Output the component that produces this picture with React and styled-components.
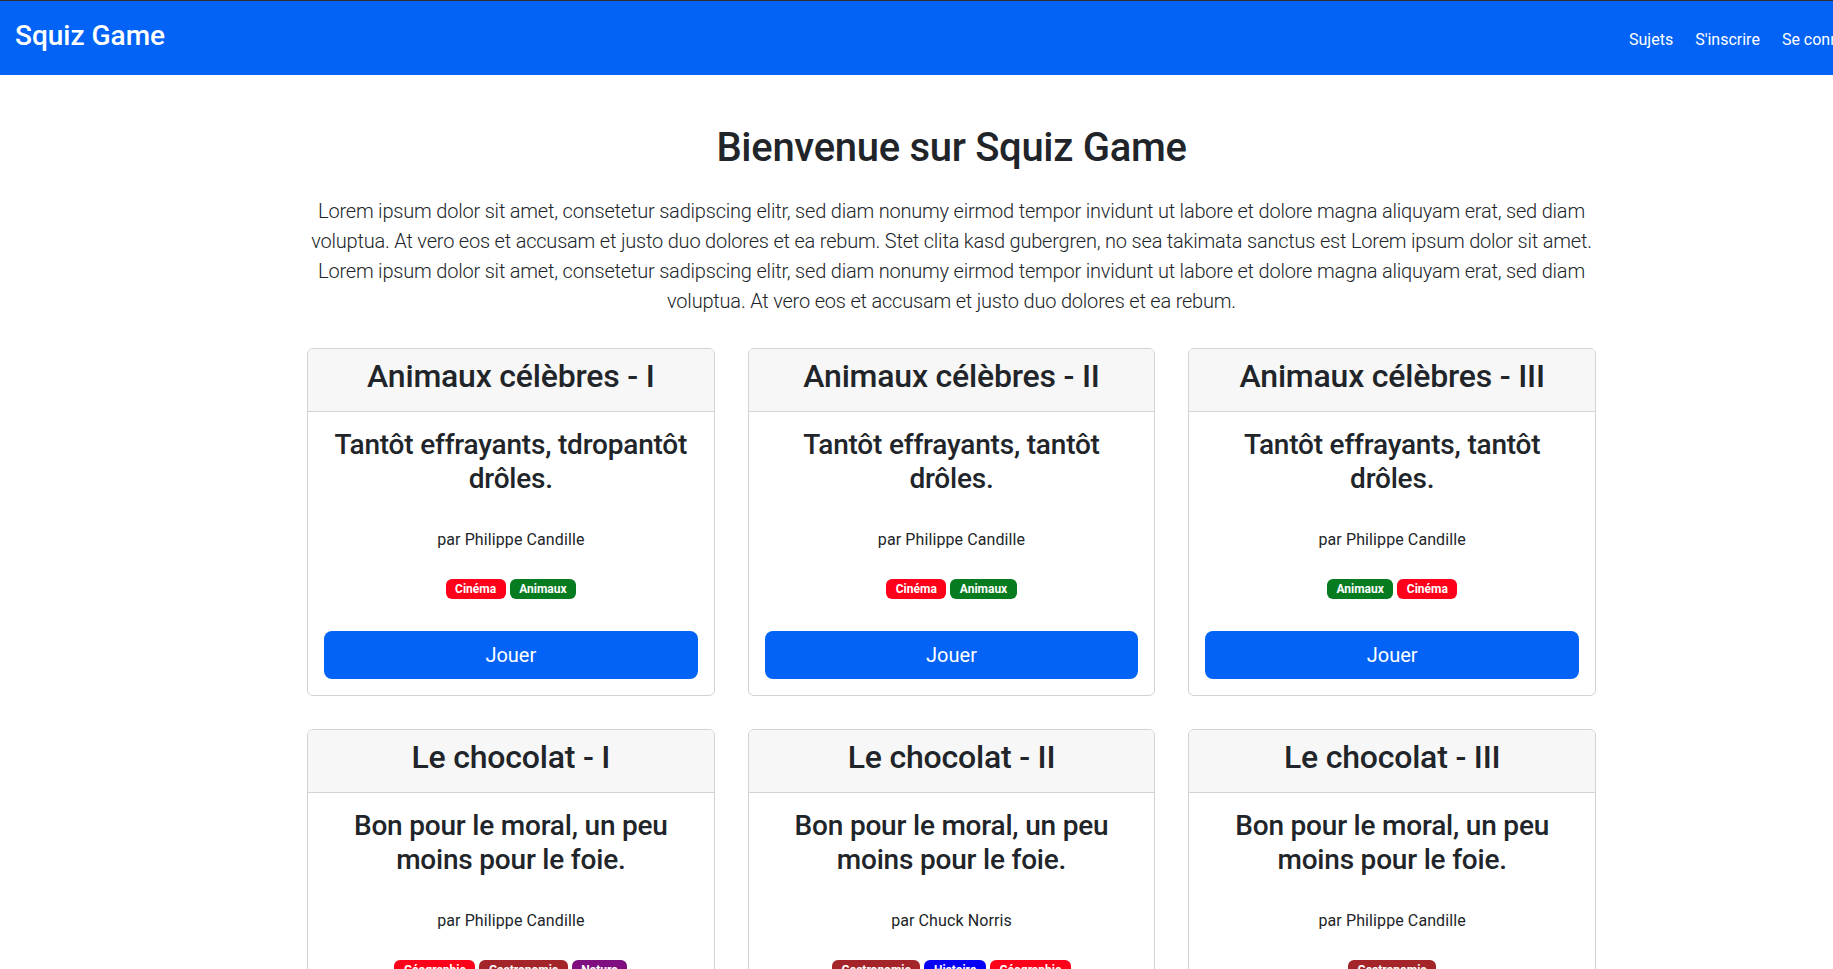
import React from "react";
import styled, { createGlobalStyle } from "styled-components";

const GlobalStyle = createGlobalStyle`
  html, body {
    margin: 0;
    padding: 0;
    overflow-x: hidden;
    background: #fff;
  }
  body {
    font-family: Roboto, "Noto Sans", sans-serif;
    color: #212529;
  }
`;

const Page = styled.div`
  width: 1903px;
`;

const Navbar = styled.nav`
  height: 74px;
  border-top: 1px solid #2e2e2e;
  background: #0263f6;
  display: flex;
  align-items: center;
  padding: 0 28px 0 15px;
`;

const Brand = styled.a`
  font-size: 28px;
  font-weight: 500;
  color: #fff;
  margin-top: -6px;
`;

const NavLinks = styled.ul`
  margin: 0 0 0 auto;
  padding: 0;
  list-style: none;
  display: flex;
  gap: 22px;
`;

const NavLink = styled.li`
  font-size: 16px;
  color: #fff;
  margin-top: 2px;
`;

const Main = styled.main`
  width: 1296px;
  margin: 0 auto;
  padding-top: 49px;
`;

const Heading = styled.h1`
  margin: 0 0 24px;
  font-size: 40px;
  font-weight: 500;
  line-height: 48px;
  text-align: center;
  letter-spacing: -0.3px;
`;

const Lead = styled.p`
  margin: 0 0 32px;
  font-size: 20px;
  font-weight: 300;
  line-height: 30px;
  text-align: center;
  letter-spacing: -0.2px;
`;

const Grid = styled.div`
  width: 1289px;
  margin: 0 auto;
  display: grid;
  grid-template-columns: repeat(3, 1fr);
  gap: 33px;
`;

const Card = styled.div`
  border: 1px solid #d3d3d3;
  border-radius: 6px;
  overflow: hidden;
  text-align: center;
`;

const CardHeader = styled.div`
  background: #f7f7f7;
  border-bottom: 1px solid #d3d3d3;
  padding: 8px 16px 16px;
`;

const CardName = styled.h2`
  margin: 0;
  font-size: 32px;
  font-weight: 500;
  line-height: 38px;
  letter-spacing: -0.2px;
`;

const CardBody = styled.div`
  padding: 16px;
`;

const CardTitle = styled.h3`
  margin: 0 0 32px;
  font-size: 28px;
  font-weight: 500;
  line-height: 34px;
  letter-spacing: -0.2px;
`;

const Author = styled.p`
  margin: 0 0 27px;
  font-size: 16px;
  line-height: 24px;
  letter-spacing: 0.1px;
`;

const Tags = styled.div`
  display: flex;
  justify-content: center;
  gap: 4px;
  margin-bottom: 32px;
`;

const Tag = styled.span`
  display: inline-block;
  padding: 4px 9.5px;
  border-radius: 6px;
  font-size: 12px;
  font-weight: 700;
  line-height: 12px;
  color: #fff;
  background: ${(p) => p.$color};
`;

const PlayButton = styled.button`
  display: block;
  width: 100%;
  height: 48px;
  border: none;
  border-radius: 8px;
  background: #0263f6;
  color: #fff;
  font-family: inherit;
  font-size: 20px;
  cursor: pointer;
`;

const COLORS = {
  Cinéma: "#fe0019",
  Animaux: "#067b1f",
  Géographie: "#fe0019",
  Gastronomie: "#a3252a",
  Nature: "#7f0f80",
  Histoire: "#0600f6",
};

const quizzes = [
  {
    name: "Animaux célèbres - I",
    title: "Tantôt effrayants, tdropantôt drôles.",
    author: "Philippe Candille",
    tags: ["Cinéma", "Animaux"],
  },
  {
    name: "Animaux célèbres - II",
    title: "Tantôt effrayants, tantôt drôles.",
    author: "Philippe Candille",
    tags: ["Cinéma", "Animaux"],
  },
  {
    name: "Animaux célèbres - III",
    title: "Tantôt effrayants, tantôt drôles.",
    author: "Philippe Candille",
    tags: ["Animaux", "Cinéma"],
  },
  {
    name: "Le chocolat - I",
    title: "Bon pour le moral, un peu moins pour le foie.",
    author: "Philippe Candille",
    tags: ["Géographie", "Gastronomie", "Nature"],
  },
  {
    name: "Le chocolat - II",
    title: "Bon pour le moral, un peu moins pour le foie.",
    author: "Chuck Norris",
    tags: ["Gastronomie", "Histoire", "Géographie"],
  },
  {
    name: "Le chocolat - III",
    title: "Bon pour le moral, un peu moins pour le foie.",
    author: "Philippe Candille",
    tags: ["Gastronomie"],
  },
];

const App = () => (
  <Page>
    <GlobalStyle />
    <Navbar>
      <Brand>Squiz Game</Brand>
      <NavLinks>
        <NavLink>Sujets</NavLink>
        <NavLink>S'inscrire</NavLink>
        <NavLink>Se connecter</NavLink>
      </NavLinks>
    </Navbar>
    <Main>
      <Heading>Bienvenue sur Squiz Game</Heading>
      <Lead>
        Lorem ipsum dolor sit amet, consetetur sadipscing elitr, sed diam nonumy eirmod tempor invidunt ut labore et
        dolore magna aliquyam erat, sed diam voluptua. At vero eos et accusam et justo duo dolores et ea rebum. Stet
        clita kasd gubergren, no sea takimata sanctus est Lorem ipsum dolor sit amet. Lorem ipsum dolor sit amet,
        consetetur sadipscing elitr, sed diam nonumy eirmod tempor invidunt ut labore et dolore magna aliquyam erat,
        sed diam voluptua. At vero eos et accusam et justo duo dolores et ea rebum.
      </Lead>
      <Grid>
        {quizzes.map((quiz) => (
          <Card key={quiz.name}>
            <CardHeader>
              <CardName>{quiz.name}</CardName>
            </CardHeader>
            <CardBody>
              <CardTitle>{quiz.title}</CardTitle>
              <Author>par {quiz.author}</Author>
              <Tags>
                {quiz.tags.map((tag) => (
                  <Tag key={tag} $color={COLORS[tag]}>
                    {tag}
                  </Tag>
                ))}
              </Tags>
              <PlayButton>Jouer</PlayButton>
            </CardBody>
          </Card>
        ))}
      </Grid>
    </Main>
  </Page>
);

export default App;
